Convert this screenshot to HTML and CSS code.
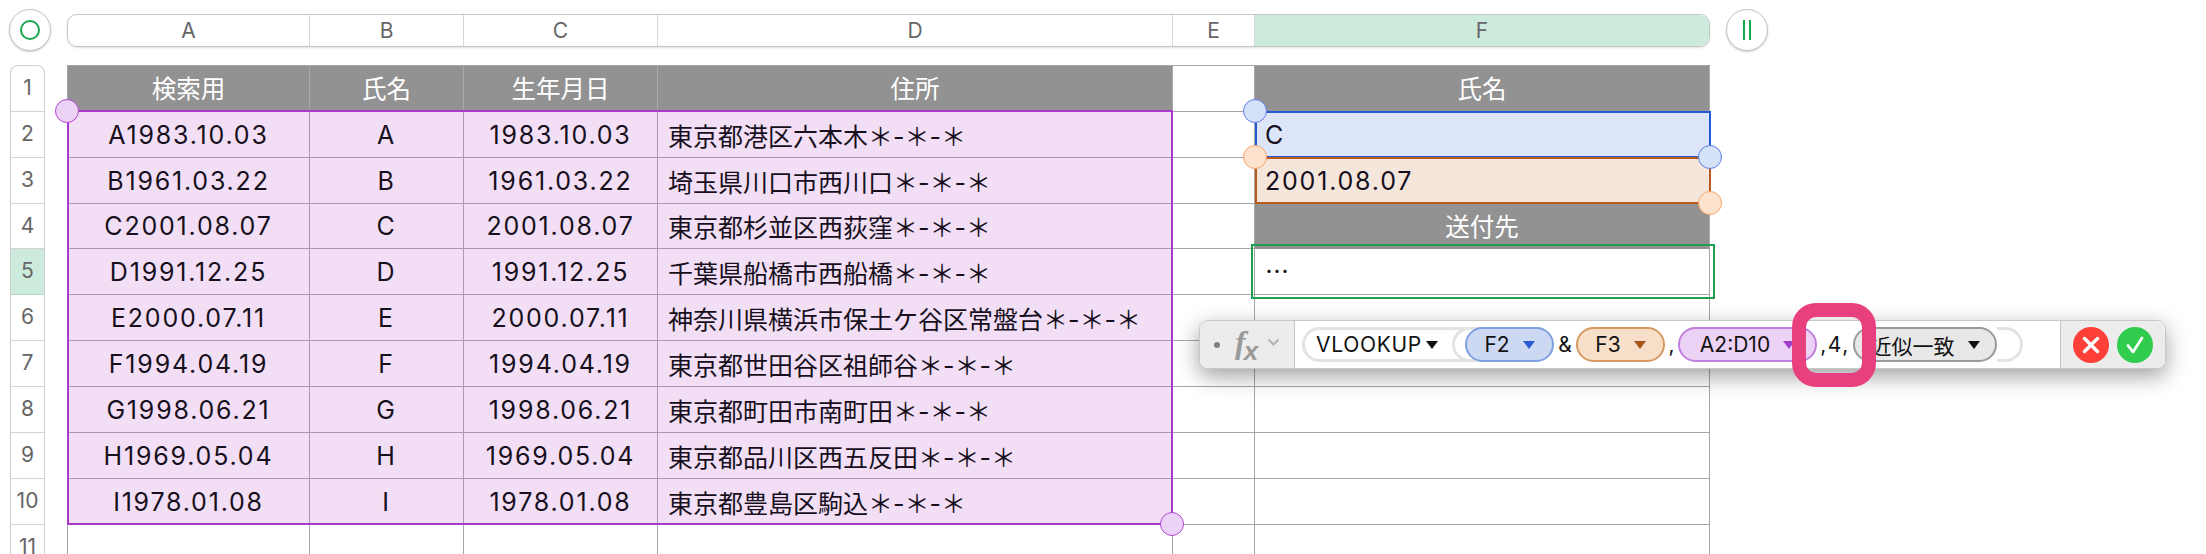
FILE: index.html
```html
<!DOCTYPE html>
<html lang="ja">
<head>
<meta charset="utf-8">
<title>VLOOKUP</title>
<link rel="stylesheet" href="styles.css">
</head>
<body>
<div class="page">
  <header class="topbar">
    <div class="round-btn round-left"><span class="ring"></span></div>
    <div class="col-heads">
      <div class="col-head w-a">A</div>
      <div class="col-head w-b">B</div>
      <div class="col-head w-c">C</div>
      <div class="col-head w-d">D</div>
      <div class="col-head w-e">E</div>
      <div class="col-head w-f col-active">F</div>
    </div>
    <div class="round-btn round-right"><span class="bars"></span></div>
  </header>
  <main class="sheet">
    <div class="row-heads">
      <div class="row-head">1</div>
      <div class="row-head">2</div>
      <div class="row-head">3</div>
      <div class="row-head short">4</div>
      <div class="row-head row-active">5</div>
      <div class="row-head">6</div>
      <div class="row-head">7</div>
      <div class="row-head">8</div>
      <div class="row-head">9</div>
      <div class="row-head">10</div>
      <div class="row-head">11</div>
    </div>
    <div class="grid">
      <div class="cell head">検索用</div><div class="cell head">氏名</div><div class="cell head">生年月日</div><div class="cell head">住所</div><div class="cell"></div><div class="cell head">氏名</div>

      <div class="cell data latin">A1983.10.03</div><div class="cell data latin">A</div><div class="cell data latin">1983.10.03</div><div class="cell data left addr">東京都港区六本木＊-＊-＊</div><div class="cell"></div><div class="cell left blue latin">C</div>
      <div class="cell data latin">B1961.03.22</div><div class="cell data latin">B</div><div class="cell data latin">1961.03.22</div><div class="cell data left addr">埼玉県川口市西川口＊-＊-＊</div><div class="cell"></div><div class="cell left orange latin">2001.08.07</div>
      <div class="cell data latin">C2001.08.07</div><div class="cell data latin">C</div><div class="cell data latin">2001.08.07</div><div class="cell data left addr">東京都杉並区西荻窪＊-＊-＊</div><div class="cell"></div><div class="cell head">送付先</div>
      <div class="cell data latin">D1991.12.25</div><div class="cell data latin">D</div><div class="cell data latin">1991.12.25</div><div class="cell data left addr">千葉県船橋市西船橋＊-＊-＊</div><div class="cell"></div><div class="cell left"><span class="dots">…</span></div>
      <div class="cell data latin">E2000.07.11</div><div class="cell data latin">E</div><div class="cell data latin">2000.07.11</div><div class="cell data left addr">神奈川県横浜市保土ケ谷区常盤台＊-＊-＊</div><div class="cell"></div><div class="cell"></div>
      <div class="cell data latin">F1994.04.19</div><div class="cell data latin">F</div><div class="cell data latin">1994.04.19</div><div class="cell data left addr">東京都世田谷区祖師谷＊-＊-＊</div><div class="cell"></div><div class="cell"></div>
      <div class="cell data latin">G1998.06.21</div><div class="cell data latin">G</div><div class="cell data latin">1998.06.21</div><div class="cell data left addr">東京都町田市南町田＊-＊-＊</div><div class="cell"></div><div class="cell"></div>
      <div class="cell data latin">H1969.05.04</div><div class="cell data latin">H</div><div class="cell data latin">1969.05.04</div><div class="cell data left addr">東京都品川区西五反田＊-＊-＊</div><div class="cell"></div><div class="cell"></div>
      <div class="cell data latin">I1978.01.08</div><div class="cell data latin">I</div><div class="cell data latin">1978.01.08</div><div class="cell data left addr">東京都豊島区駒込＊-＊-＊</div><div class="cell"></div><div class="cell"></div>
      <div class="cell"></div><div class="cell"></div><div class="cell"></div><div class="cell"></div><div class="cell"></div><div class="cell"></div>

      <div class="range range-purple"></div>
      <div class="range range-blue"></div>
      <div class="range range-orange"></div>
      <div class="range range-green"></div>
      <span class="handle h-purple h-p1"></span>
      <span class="handle h-purple h-p2"></span>
      <span class="handle h-blue h-b1"></span>
      <span class="handle h-orange h-o1"></span>
      <span class="handle h-blue h-b2"></span>
      <span class="handle h-orange h-o2"></span>
    </div>
  </main>

  <div class="formula-bar">
    <div class="fx-part">
      <span class="fx-dot"></span>
      <span class="fx-text">f<sub>x</sub></span>
      <svg class="fx-chevron" width="13" height="8" viewBox="0 0 13 8"><path d="M1.5 1.5 L6.5 6.5 L11.5 1.5" fill="none" stroke="#b4b4b4" stroke-width="2.2"/></svg>
    </div>
    <div class="tokens">
      <div class="fn-pill">
        <span class="fn-name">VLOOKUP</span><span class="tri tri-black"></span>
        <span class="open-arc"></span>
      </div>
      <div class="pill pill-f2">F2<span class="tri tri-blue"></span></div>
      <span class="op op-amp">&amp;</span>
      <div class="pill pill-f3">F3<span class="tri tri-brown"></span></div>
      <span class="op op-comma">,</span>
      <div class="pill pill-range">A2:D10<span class="tri tri-purple"></span></div>
      <span class="op op-four">,4,</span>
      <div class="pill pill-mode">近似一致<span class="tri tri-black"></span></div>
      <span class="close-arc"></span>
    </div>
    <div class="actions">
      <svg class="action" width="36" height="36" viewBox="0 0 36 36"><circle cx="18" cy="18" r="18" fill="#ff4039"/><path d="M11.5 11.5 L24.5 24.5 M24.5 11.5 L11.5 24.5" stroke="#fff" stroke-width="3.4" stroke-linecap="round"/></svg>
      <svg class="action" width="36" height="36" viewBox="0 0 36 36"><circle cx="18" cy="18" r="18" fill="#30cc4e"/><path d="M11 18.5 L16 25 L25 11" fill="none" stroke="#fff" stroke-width="2.8" stroke-linecap="round" stroke-linejoin="round"/></svg>
    </div>
    <div class="callout"></div>
  </div>
</div>
</body>
</html>
```
FILE: styles.css
```css
* { box-sizing: border-box; }
html, body { margin: 0; padding: 0; background: #fff; }
.page {
  position: relative;
  width: 2206px;
  height: 554px;
  overflow: hidden;
  font-family: "Inter", "Noto Sans CJK JP", sans-serif;
  color: #1c1c1c;
}

/* top header row */
.topbar {
  display: flex;
  align-items: center;
  height: 54px;
  padding: 6px 0 0 9px;
}
.round-btn {
  display: flex;
  align-items: center;
  justify-content: center;
  flex: none;
  width: 42px;
  height: 42px;
  border: 1px solid #c4c4c4;
  border-radius: 50%;
  background: #fff;
  box-shadow: 0 1px 2px rgba(0,0,0,.2);
}
.ring {
  width: 20px;
  height: 20px;
  border: 2px solid #1aa84f;
  border-radius: 50%;
}
.bars {
  width: 8px;
  height: 20px;
  border-left: 2px solid #1aa84f;
  border-right: 2px solid #1aa84f;
}
.col-heads {
  display: flex;
  height: 33px;
  margin-left: 16px;
  border: 1px solid #c6c6c6;
  border-radius: 10px;
  overflow: hidden;
  box-shadow: 0 1px 2px rgba(0,0,0,.12);
  flex: none;
}
.round-right { margin-left: 16px; }
.col-head {
  display: flex;
  align-items: center;
  justify-content: center;
  border-right: 1px solid #d8d8d8;
  font-size: 21px;
  color: #666;
}
.w-a { width: 242px; }
.w-b { width: 154px; }
.w-c { width: 194px; }
.w-d { width: 515px; }
.w-e { width: 82px; }
.w-f { width: 454px; border-right: 0; }
.col-active { background: #cdebdc; }

/* sheet */
.sheet {
  display: flex;
  align-items: flex-start;
  padding: 11px 0 0 10px;
}
.row-heads {
  width: 35px;
  flex: none;
  border: 1px solid #cfcfcf;
  border-bottom: 0;
  border-radius: 8px 8px 0 0;
  margin-right: 22px;
}
.row-head {
  display: flex;
  align-items: center;
  justify-content: center;
  height: 46px;
  padding-bottom: 2px;
  border-bottom: 1px solid #d4d4d4;
  font-size: 21px;
  color: #666;
}
.row-head.short { height: 45px; }
.row-active { background: #cdebdc; border-bottom-color: #b5d8c6; }

.grid {
  position: relative;
  display: grid;
  grid-template-columns: 242px 154px 194px 515px 82px 455px;
  grid-template-rows: 46px 46px 46px 45px 46px 46px 46px 46px 46px 46px 46px;
  border-top: 1px solid #a6a6a6;
  border-left: 1px solid #a6a6a6;
  font-size: 24px;
  flex: none;
}
.cell {
  display: flex;
  align-items: center;
  justify-content: center;
  min-width: 0;
  border-right: 1px solid #a6a6a6;
  border-bottom: 1px solid #a6a6a6;
  white-space: nowrap;
  color: #17101c;
}
.left { justify-content: flex-start; padding-left: 10px; }
.latin { font-size: 25px; letter-spacing: 1.8px; }
.addr { font-size: 25px; }
.head {
  padding-bottom: 2px;
  background: #929292;
  color: #fff;
  font-size: 24.5px;
  border-right-color: #aaa;
  border-bottom-color: #929292;
}
.data {
  background: #f2dff6;
  border-color: #ab96b4;
}
.blue { background: #dce6f8; }
.orange { background: #f5e6dc; }
.dots { font-family: "Noto Sans CJK JP", sans-serif; line-height: 1; padding-bottom: 3px; }

/* reference range boxes over the grid */
.range { position: absolute; pointer-events: none; }
.range-purple {
  left: -1px; top: 44px; width: 1106px; height: 415px;
  border: 2px solid #ad38ce;
}
.range-blue {
  left: 1187px; top: 45px; width: 456px; height: 47px;
  border: 2px solid #2658d8;
}
.range-orange {
  left: 1187px; top: 91px; width: 456px; height: 47px;
  border: 2px solid #b95a1c;
}
.range-green {
  left: 1183px; top: 178px; width: 464px; height: 55px;
  border: 2px solid #1f9f52;
}
.handle {
  position: absolute;
  width: 24px;
  height: 24px;
  border-radius: 50%;
  border: 1.5px solid;
}
.h-purple { background: #ecd3f6; border-color: #b443d2; }
.h-blue { background: #d4e1f6; border-color: #5f7ce8; }
.h-orange { background: #fde2cd; border-color: #f6a267; }
.h-p1 { left: -13px; top: 33px; }
.h-p2 { left: 1092px; top: 446px; }
.h-b1 { left: 1175px; top: 33px; }
.h-o1 { left: 1175px; top: 79px; }
.h-b2 { left: 1630px; top: 79px; }
.h-o2 { left: 1630px; top: 125px; }

/* floating formula bar */
.formula-bar {
  position: absolute;
  left: 1199px;
  top: 320px;
  width: 967px;
  height: 49px;
  display: flex;
  align-items: stretch;
  background: #fff;
  border: 1px solid #c8c8c8;
  border-radius: 9px;
  box-shadow: 0 7px 22px rgba(0,0,0,.38);
  font-size: 21px;
  color: #111;
}
.fx-part {
  display: flex;
  align-items: center;
  flex: none;
  width: 95px;
  padding-left: 14px;
  background: #ececec;
  border-right: 1px solid #c4c4c4;
  border-radius: 8px 0 0 8px;
}
.fx-dot {
  width: 6px;
  height: 6px;
  border-radius: 50%;
  background: #808080;
  flex: none;
}
.fx-text {
  margin-left: 15px;
  font: italic bold 32px/1 "Liberation Serif", serif;
  color: #9a9a9a;
}
.fx-text sub {
  font: italic bold 26px/1 "Liberation Sans", sans-serif;
  vertical-align: -7px;
  margin-left: -2px;
}
.fx-chevron { margin-left: 9px; margin-bottom: 6px; flex: none; }

.tokens {
  display: flex;
  align-items: center;
  flex: 1;
  min-width: 0;
  padding-left: 7px;
}
.fn-pill {
  position: relative;
  display: flex;
  align-items: center;
  flex: none;
  width: 180px;
  height: 35px;
  margin-right: -17px;
  padding-left: 11px;
  background: #fff;
  border: 3px solid #e3e3e3;
  border-right: 0;
  border-radius: 18px 0 0 18px;
}
.fn-name { letter-spacing: .7px; }
.open-arc {
  position: absolute;
  left: 147px;
  top: -3px;
  width: 30px;
  height: 35px;
  border: 3px solid #e3e3e3;
  border-right: 0;
  border-radius: 18px 0 0 18px;
}
.tri {
  flex: none;
  width: 0;
  height: 0;
  border-left: 6px solid transparent;
  border-right: 6px solid transparent;
  border-top: 8px solid #000;
}
.fn-pill .tri { margin-left: 4px; }
.tri-black { border-top-color: #111; }
.tri-blue { border-top-color: #2a5ad0; }
.tri-brown { border-top-color: #a8521c; }
.tri-purple { border-top-color: #a040c8; }
.pill {
  position: relative;
  display: flex;
  align-items: center;
  justify-content: center;
  flex: none;
  height: 35px;
  border: 2px solid;
  border-radius: 18px;
  gap: 13px;
}
.pill-f2 { width: 89px; background: #cdd9f2; border-color: #7ea0e0; }
.pill-f3 { width: 89px; background: #f7dfc9; border-color: #d69a62; }
.pill-range { width: 139px; background: #ecd3f5; border-color: #c17fdc; }
.pill-mode { width: 144px; background: #e8e8e8; border-color: #9a9a9a; }
.op { flex: none; text-align: center; white-space: nowrap; }
.op-amp { width: 22px; }
.op-comma { width: 13px; }
.op-four { width: 36px; letter-spacing: 1.5px; }
.close-arc {
  flex: none;
  width: 26px;
  height: 35px;
  border: 3px solid #e3e3e3;
  border-left: 0;
  border-radius: 0 18px 18px 0;
}
.actions {
  display: flex;
  align-items: center;
  flex: none;
  gap: 8px;
  width: 105px;
  padding-left: 12px;
  background: #ececec;
  border-left: 1px solid #c4c4c4;
  border-radius: 0 8px 8px 0;
}
.action { flex: none; }
.callout {
  position: absolute;
  left: 592px;
  top: -18px;
  width: 84px;
  height: 84px;
  border: 14px solid #e8407f;
  border-radius: 24px;
}
```
